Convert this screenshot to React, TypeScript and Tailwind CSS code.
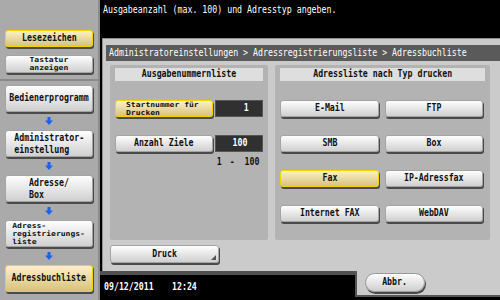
import React from 'react';

const N: React.FC<{ children: React.ReactNode; className?: string }> = ({ children, className = '' }) => (
  <span className={`inline-block shrink-0 scale-x-75 whitespace-nowrap ${className}`}>{children}</span>
);

// two line labels at normal size
const M: React.FC<{ children: React.ReactNode }> = ({ children }) => (
  <span className="inline-block shrink-0 scale-x-[0.83] whitespace-nowrap text-left text-[10px] leading-[12px]">
    {children}
  </span>
);

const S: React.FC<{ children: React.ReactNode; className?: string }> = ({ children, className = '' }) => (
  <span className={`inline-block shrink-0 scale-x-[1.15] whitespace-nowrap text-[7px] leading-[8px] ${className}`}>
    {children}
  </span>
);

const Btn: React.FC<{ children: React.ReactNode; className?: string; yellow?: boolean }> = ({
  children,
  className = '',
  yellow = false,
}) => (
  <div
    className={`relative flex shrink-0 items-center justify-center rounded-[3px] border font-bold text-[#111] shadow-[1px_2px_0_#4a4a4a] ${
      yellow
        ? 'border-[#f2d200] bg-linear-to-b from-[#fbf1c6] to-[#d8c27c]'
        : 'border-[#a4a4a4] bg-linear-to-b from-[#fefefe] to-[#d0d0d0]'
    } ${className}`}
  >
    {children}
  </div>
);

const Arrow = () => (
  <div className="flex h-[18px] w-[88px] items-center justify-center">
    <svg width="8" height="8" viewBox="0 0 8 8">
      <path d="M2.5 0h3v3.5H8L4 8 0 3.5h2.5z" fill="#1f62e8" />
    </svg>
  </div>
);

const Sidebar = () => (
  <div className="flex w-[100px] shrink-0 flex-col border-r-2 border-[#8c8c8c] bg-[#aaaaaa] pl-[5px]">
    <Btn yellow className="mt-[30px] h-[17px] w-[88px] text-[11px]">
      <N>Lesezeichen</N>
    </Btn>
    <Btn className="mt-[8px] h-[18px] w-[88px]">
      <S className="text-center">
        Tastatur
        <br />
        anzeigen
      </S>
    </Btn>
    <div className="-ml-[5px] mt-[6px] h-[2px] w-[98px] bg-[#8a8a8a]" />
    <Btn className="mt-[4px] h-[27px] w-[88px] text-[11px]">
      <N>Bedienerprogramm</N>
    </Btn>
    <Arrow />
    <Btn className="h-[27px] w-[88px]">
      <M>
        Administrator-
        <br />
        einstellung
      </M>
    </Btn>
    <Arrow />
    <Btn className="h-[27px] w-[88px]">
      <M>
        Adresse/
        <br />
        Box
      </M>
    </Btn>
    <Arrow />
    <Btn className="h-[27px] w-[88px]">
      <S className="text-left">
        Adress-
        <br />
        registrierungs-
        <br />
        liste
      </S>
    </Btn>
    <Arrow />
    <Btn yellow className="h-[27px] w-[88px] text-[11px]">
      <N>Adressbuchliste</N>
    </Btn>
  </div>
);

const Value: React.FC<{ v: string }> = ({ v }) => (
  <div className="flex h-[17px] w-[50px] items-center justify-end border border-[#555] bg-[#303030] pr-[12px] text-[11px] font-bold text-white">
    <N>{v}</N>
  </div>
);

export default function App() {
  return (
    <div className="flex h-[300px] w-[500px] overflow-hidden bg-black font-['DejaVu_Sans_Mono','Liberation_Mono',monospace]">
      <Sidebar />
      <div className="flex flex-1 flex-col">
        <div className="h-[38px] pl-[3px] pt-[2px] text-[11px] text-white">
          <N className="origin-left">Ausgabeanzahl (max. 100) und Adresstyp angeben.</N>
        </div>

        <div className="mx-[2px] flex h-[233px] flex-col border-l border-t border-[#8e8e8e] bg-[#cbcbcb] px-[3px] pt-[6px]">
          <div className="flex h-[16px] shrink-0 items-center overflow-hidden bg-[#5a5a5a] pl-[3px] text-[11px] text-white">
            <N className="origin-left">Administratoreinstellungen &gt; Adressregistrierungsliste &gt; Adressbuchliste</N>
          </div>

          <div className="mt-[4px] flex gap-[7px] pl-[4px]">
            <div className="flex h-[175px] w-[158px] flex-col rounded-[2px] bg-[#b3b3b3] px-[5px] pt-[3px]">
              <div className="flex h-[13px] items-center justify-center bg-[#dedede] text-[11px] font-bold text-[#111]">
                <N>Ausgabenummernliste</N>
              </div>
              <div className="mt-[19px] flex gap-[2px]">
                <Btn yellow className="h-[17px] w-[98px] justify-start pl-[10px]">
                  <S className="origin-left text-left">
                    Startnummer für
                    <br />
                    Drucken
                  </S>
                </Btn>
                <Value v="1" />
              </div>
              <div className="mt-[18px] flex gap-[2px]">
                <Btn className="h-[17px] w-[98px] text-[11px]">
                  <N>Anzahl Ziele</N>
                </Btn>
                <Value v="100" />
              </div>
              <div className="ml-auto mr-[1px] mt-[2px] flex w-[46px] justify-between text-[11px] font-bold text-[#111]">
                <N>1</N>
                <N>-</N>
                <N>100</N>
              </div>
            </div>

            <div className="flex h-[175px] w-[215px] flex-col rounded-[2px] bg-[#b3b3b3] px-[5px] pt-[3px]">
              <div className="flex h-[13px] items-center justify-center bg-[#dedede] text-[11px] font-bold text-[#111]">
                <N>Adressliste nach Typ drucken</N>
              </div>
              <div className="mt-[19px] grid grid-cols-[99px_98px] gap-x-[6px] gap-y-[18px] text-[11px]">
                <Btn className="h-[17px]"><N>E-Mail</N></Btn>
                <Btn className="h-[17px]"><N>FTP</N></Btn>
                <Btn className="h-[17px]"><N>SMB</N></Btn>
                <Btn className="h-[17px]"><N>Box</N></Btn>
                <Btn yellow className="h-[17px]"><N>Fax</N></Btn>
                <Btn className="h-[17px]"><N>IP-Adressfax</N></Btn>
                <Btn className="h-[17px]"><N>Internet FAX</N></Btn>
                <Btn className="h-[17px]"><N>WebDAV</N></Btn>
              </div>
            </div>
          </div>

          <div className="mt-[5px] pl-[4px]">
            <Btn className="h-[18px] w-[109px] text-[11px]">
              <N>Druck</N>
              <svg className="absolute bottom-[2px] right-[2px]" width="5" height="5" viewBox="0 0 5 5">
                <polygon points="5,0 5,5 0,5" fill="#555" />
              </svg>
            </Btn>
          </div>
        </div>

        <div className="flex flex-1">
          <div className="flex w-[255px] items-center gap-[2px] border-t-4 border-[#505050] pl-[4px] text-[11px] font-bold text-white">
            <N className="origin-left">09/12/2011</N>
            <N className="origin-left">12:24</N>
          </div>
          <div className="mb-[3px] mr-[2px] flex flex-1 items-start border-b-2 border-l-2 border-r border-[#555] bg-[#cbcbcb] pl-[8px] pt-[2px]">
            <div className="flex h-[19px] w-[60px] items-center justify-center rounded-full border border-[#999] bg-linear-to-b from-[#fdfdfd] to-[#cfcfcf] text-[11px] font-bold text-[#111] shadow-[1px_2px_0_#4a4a4a]">
              <N>Abbr.</N>
            </div>
          </div>
        </div>
      </div>
    </div>
  );
}
